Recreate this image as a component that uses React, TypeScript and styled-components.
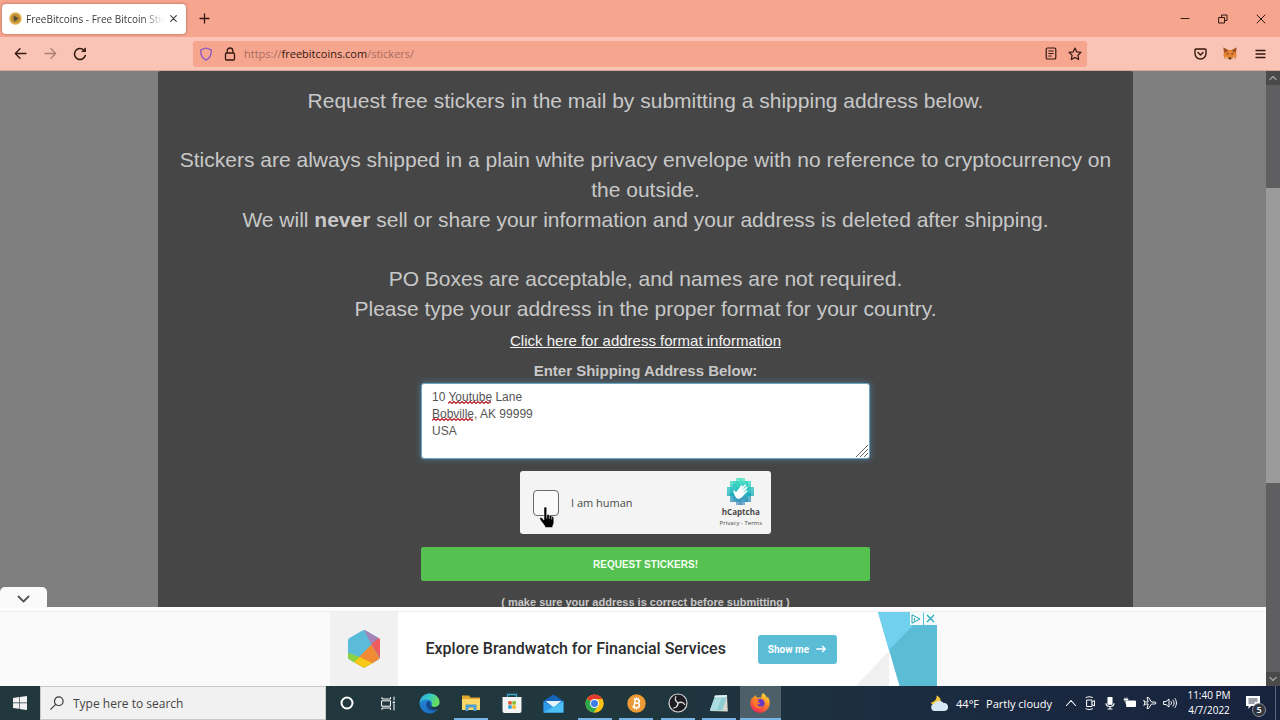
import React from "react";
import styled, { createGlobalStyle, css } from "styled-components";

const uiFont = `"Open Sans", "Noto Sans", sans-serif`;
const siteFont = `"Liberation Sans", Arial, sans-serif`;

const GlobalStyle = createGlobalStyle`
  *, *::before, *::after { box-sizing: border-box; }
  body { margin: 0; font-family: ${uiFont}; overflow: hidden; }
  button { font: inherit; color: inherit; border: 0; padding: 0; background: none; cursor: pointer; }
  svg { display: block; flex: none; }
`;

const Desktop = styled.div`
  display: flex;
  flex-direction: column;
  height: 100vh;
  background: #7f7f7f;
`;

/* ---------- browser chrome ---------- */

const TitleBar = styled.header`
  flex: none;
  height: 37px;
  display: flex;
  align-items: center;
  background: #f6a58f;
  color: #33190f;
`;

const Tab = styled.div`
  width: 184px;
  height: 30px;
  margin: 0 8px 0 2px;
  padding: 0 8px 0 7px;
  display: flex;
  align-items: center;
  gap: 4px;
  background: #fff;
  border-radius: 4px;
  box-shadow: 0 0 3px rgba(90, 30, 10, 0.5);
  color: #3a3a3f;
`;

const TabTitle = styled.span`
  flex: 1;
  min-width: 0;
  overflow: hidden;
  white-space: nowrap;
  font-size: 10px;
  line-height: 16px;
  mask-image: linear-gradient(to right, #000 84%, transparent);
`;

const IconButton = styled.button<{ $w?: number; $dim?: boolean }>`
  width: ${(p) => p.$w ?? 20}px;
  height: 20px;
  flex: none;
  display: flex;
  align-items: center;
  justify-content: center;
  opacity: ${(p) => (p.$dim ? 0.4 : 1)};
`;

const WindowControls = styled.div`
  margin-left: auto;
  display: flex;
`;

const NavBar = styled.nav`
  flex: none;
  height: 34px;
  display: flex;
  align-items: center;
  background: #f9c3b5;
  border-bottom: 1px solid #d9a496;
  color: #33190f;
`;

const NavGroup = styled.div`
  width: 193px;
  flex: none;
  display: flex;
  gap: 10px;
  padding-left: 10px;
`;

const UrlBar = styled.div`
  flex: 1;
  height: 26px;
  display: flex;
  align-items: center;
  gap: 4px;
  padding: 0 2px 0 3px;
  background: #f6a58f;
  border-radius: 3px;
`;

const UrlField = styled.input`
  position: absolute;
  inset: 0;
  width: 100%;
  border: 0;
  padding: 0;
  background: none;
  opacity: 0;
`;

const UrlText = styled.label`
  position: relative;
  flex: 1;
  font-size: 11px;
  line-height: 20px;
  color: #a86e5e;
  strong { font-weight: 400; color: #33190f; }
`;

const NavActions = styled.div`
  width: 193px;
  flex: none;
  display: flex;
  justify-content: flex-end;
  gap: 10px;
  padding-right: 10px;
`;

/* ---------- web page ---------- */

const Viewport = styled.div`
  flex: 1;
  min-height: 0;
  display: flex;
`;

const PageColumn = styled.div`
  flex: 1;
  min-width: 0;
  display: flex;
  flex-direction: column;
`;

const Page = styled.main`
  flex: 1;
  min-height: 0;
  overflow: hidden;
  background: #7f7f7f;
  padding: 0 133px 0 158px;
  font-family: ${siteFont};
`;

const Card = styled.section`
  display: flex;
  flex-direction: column;
  align-items: center;
  min-height: 100%;
  padding: 15px 8px 0;
  background: #464646;
  border-radius: 3px 3px 0 0;
  color: #c8c8c8;
  text-align: center;
`;

const Lead = styled.p`
  margin: 0 0 29px;
  font-size: 21px;
  line-height: 30px;
  &:last-of-type { margin-bottom: 0; }
`;

const FormatLink = styled.a`
  margin-top: 5px;
  font-size: 15px;
  line-height: 24px;
  color: #f4f4f4;
  text-decoration: underline;
`;

const Form = styled.form`
  width: 449px;
  display: flex;
  flex-direction: column;
  align-items: center;
`;

const FieldLabel = styled.label`
  margin-top: 6px;
  font-size: 15px;
  font-weight: 700;
  line-height: 24px;
`;

const AddressBox = styled.div`
  position: relative;
  width: 100%;
  height: 76px;
`;

const Address = styled.textarea`
  display: block;
  width: 100%;
  height: 100%;
  margin: 0;
  padding: 5px 10px;
  border: 1px solid #6aa5c4;
  border-radius: 3px;
  outline: 0;
  box-shadow: 0 0 7px rgba(82, 148, 190, 0.7);
  background: #fff;
  color: #555;
  font-family: ${siteFont};
  font-size: 12px;
  line-height: 17px;
  resize: none;
`;

const Squiggle = styled.svg<{ $x: number; $y: number }>`
  position: absolute;
  left: ${(p) => p.$x}px;
  top: ${(p) => p.$y}px;
`;

const Grip = styled.svg`
  position: absolute;
  right: 2px;
  bottom: 2px;
`;

const Captcha = styled.div`
  position: relative;
  width: 251px;
  height: 63px;
  margin: 12px 0 13px;
  padding: 0 9px 0 13px;
  display: flex;
  align-items: center;
  background: #f4f4f4;
  border-radius: 3px;
  color: #4a4a4a;
  font-family: ${uiFont};
`;

const CaptchaCheck = styled.input`
  appearance: none;
  width: 26px;
  height: 26px;
  margin: 0 12px 0 0;
  border: 1px solid #6b6b6b;
  border-radius: 4px;
  background: #fafafa;
`;

const CaptchaLabel = styled.label`
  flex: 1;
  text-align: left;
  font-size: 11px;
  line-height: 16px;
`;

const CaptchaBrand = styled.div`
  display: flex;
  flex-direction: column;
  align-items: center;
  font-size: 8px;
  font-weight: 700;
  line-height: 12px;
`;

const CaptchaLinks = styled.span`
  font-size: 6px;
  font-weight: 400;
  line-height: 10px;
  a { color: inherit; text-decoration: none; }
`;

const Pointer = styled.svg`
  position: absolute;
  left: 18px;
  top: 35px;
  pointer-events: none;
`;

const SubmitButton = styled.button`
  && {
    width: 100%;
    height: 34px;
    background: #54c151;
    border-radius: 2px;
    color: #f2fff0;
    font-family: ${siteFont};
    font-size: 10px;
    font-weight: 700;
  }
`;

const Hint = styled.strong`
  margin-top: 13px;
  font-size: 11px;
  line-height: 16px;
`;

/* ---------- scrollbar ---------- */

const ScrollTrack = styled.div`
  width: 14px;
  flex: none;
  display: flex;
  flex-direction: column;
  background: #5f5f61;
`;

const ScrollArrow = styled.button`
  && {
    height: 14px;
    display: flex;
    align-items: center;
    justify-content: center;
    background: #4a4a4a;
    color: #9a9a9a;
  }
`;

const ScrollSpace = styled.div<{ $grow: number; $thumb?: boolean }>`
  flex: ${(p) => p.$grow};
  ${(p) => p.$thumb && css`background: #9b9b9b;`}
`;

/* ---------- anchored ad ---------- */

const AdBar = styled.aside`
  position: relative;
  flex: none;
  height: 79px;
  padding-top: 5px;
  display: flex;
  justify-content: center;
  background: linear-gradient(#fdfdfd 4px, #eeeeee 4px 5px, #fafafa 5px);
`;

const AdHandle = styled.button`
  && {
    position: absolute;
    left: 0;
    top: -20px;
    width: 47px;
    height: 21px;
    display: flex;
    align-items: center;
    justify-content: center;
    padding-top: 2px;
    background: #fafafa;
    border-radius: 5px 5px 0 0;
    color: #555;
  }
`;

const Ad = styled.div`
  position: relative;
  width: 607px;
  display: flex;
  align-items: center;
  background: #fff;
  font-family: Roboto, sans-serif;
`;

const AdLogo = styled.div`
  width: 68px;
  height: 100%;
  display: flex;
  align-items: center;
  justify-content: center;
  background: #f1f1f1;
`;

const AdTitle = styled.h2`
  flex: 1;
  margin: 0;
  padding-left: 28px;
  font-size: 16px;
  font-weight: 500;
  line-height: 24px;
  white-space: nowrap;
  color: #2b2c2e;
`;

const AdButton = styled.button`
  && {
    width: 79px;
    height: 29px;
    display: flex;
    align-items: center;
    justify-content: center;
    gap: 7px;
    background: #5bbcd6;
    border-radius: 3px;
    color: #fff;
    font-size: 10px;
    font-weight: 700;
  }
`;

const AdChoices = styled.div`
  position: absolute;
  top: 0;
  right: 0;
  display: flex;
  gap: 1px;
`;

const AdChoice = styled.button`
  && {
    width: 13px;
    height: 13px;
    background: #f4fbfc;
    display: flex;
    align-items: center;
    justify-content: center;
  }
`;

/* ---------- taskbar ---------- */

const Taskbar = styled.footer`
  flex: none;
  height: 34px;
  display: flex;
  align-items: stretch;
  background: linear-gradient(to right, #21383d, #20373e 50%, #1b2c40 70%, #18233e);
  color: #fff;
`;

const StartButton = styled.button`
  width: 40px;
  display: flex;
  align-items: center;
  justify-content: center;
`;

const SearchBox = styled.label`
  width: 286px;
  display: flex;
  align-items: center;
  gap: 9px;
  padding-left: 9px;
  background: #f1f1f1;
  border: 1px solid #c9c9c9;
  color: #3a3a3a;
`;

const SearchInput = styled.input`
  flex: 1;
  min-width: 0;
  border: 0;
  padding: 0;
  outline: 0;
  background: none;
  font-family: ${uiFont};
  font-size: 12px;
  &::placeholder { color: #444; opacity: 1; }
`;

const AppRow = styled.div`
  width: 455px;
  display: flex;
`;

const AppButton = styled.button<{ $running?: boolean; $active?: boolean }>`
  && {
    flex: 1;
    display: flex;
    align-items: center;
    justify-content: center;
    background: ${(p) => (p.$active ? "#4d5f68" : "none")};
    ${(p) => p.$running && css`
      background-image: linear-gradient(#76b4e6, #76b4e6);
      background-repeat: no-repeat;
      background-position: bottom center;
      background-size: ${p.$active ? "100%" : "34px"} 2px;
    `}
  }
`;

const Tray = styled.div`
  margin-left: auto;
  display: flex;
  align-items: center;
`;

const Weather = styled.button`
  && {
    display: flex;
    align-items: center;
    gap: 7px;
    margin-right: 13px;
    font-size: 11px;
  }
`;

const TrayIcons = styled.div`
  display: flex;
  align-items: center;
  gap: 6px;
`;

const Clock = styled.time`
  width: 56px;
  margin-left: 4px;
  display: flex;
  flex-direction: column;
  align-items: center;
  font-size: 10px;
  line-height: 15px;
  white-space: nowrap;
`;

const Notices = styled.button`
  && {
    position: relative;
    width: 32px;
    height: 28px;
    margin-right: 6px;
    display: flex;
    align-items: center;
    justify-content: center;
  }
`;

const NoticeCount = styled.span`
  position: absolute;
  right: 3px;
  bottom: 0;
  width: 14px;
  height: 14px;
  border: 1px solid #8d929c;
  border-radius: 50%;
  background: #30343d;
  font-size: 9px;
  font-weight: 600;
  line-height: 12px;
  text-align: center;
`;

const ShowDesktop = styled.button`
  && {
    width: 5px;
    align-self: stretch;
    border-left: 1px solid #5c6478;
  }
`;

/* ---------- drawings ---------- */

type StrokeProps = { w?: number; h?: number; box?: string; sw?: number; children: React.ReactNode };
const Stroke = ({ w = 16, h = w, box = `0 0 ${w} ${h}`, sw = 1.3, children }: StrokeProps) => (
  <svg width={w} height={h} viewBox={box} fill="none" stroke="currentColor" strokeWidth={sw} strokeLinecap="round" strokeLinejoin="round" aria-hidden="true">
    {children}
  </svg>
);

const Coin = () => (
  <svg width="13" height="13" viewBox="0 0 13 13" aria-hidden="true">
    <circle cx="6.5" cy="6.5" r="6.2" fill="#e0ae4a" />
    <circle cx="6.5" cy="6.5" r="4.4" fill="#b98a35" />
    <path d="M4.6 3.4 9.4 6.4 5.200 9.600Z" fill="#4d4f35" />
  </svg>
);

const Fox = () => (
  <svg width="14" height="13" viewBox="0 0 14 13" aria-hidden="true">
    <path d="M.5.5 5 3h4L13.5.5 13 5.5l.6 3-1.3 3.7-3.3-.7L8 12.5H6l-1-1-3.300.7L.4 8.500 1 5.500Z" fill="#e8812f" />
    <path d="M.5.5 5 3 4 5 1 5.500ZM13.500.5 9 3l1 2 3 .5Z" fill="#9a5428" />
    <path d="m3.500 6 2 .6-.3 1.400ZM10.500 6l-2 .6.3 1.400ZM6 10.500h2l.3 1.700H5.700Z" fill="#33302f" />
    <path d="m1.700 12.200 1.300-3 2 2.300ZM12.300 12.200l-1.300-3-2 2.300Z" fill="#d9bfaa" />
  </svg>
);

const pixelRows = [[3, 3], [1, 7], [1, 7], [0, 9], [0, 9], [0, 9], [1, 7], [1, 7], [3, 3]];
const pixelShades = ["#4fe3c4", "#3ad8c0", "#2fcdbf", "#26c3bf", "#1db8bd", "#1cabbb", "#259fba", "#3a97bd", "#5a9ac6"];
const CaptchaLogo = () => (
  <svg width="27" height="28" viewBox="0 0 27 28" aria-hidden="true">
    {pixelRows.map(([x, n], row) =>
      Array.from({ length: n }, (_, i) => (
        <rect key={`${row}-${i}`} x={(x + i) * 3} y={row * 3} width="3" height="3" fill={pixelShades[row]} opacity={i < 1 || i > n - 2 ? 0.75 : 1 - ((row + i) % 3) * 0.05} shapeRendering="crispEdges" />
      ))
    )}
    <path d="M7 15.500c-.8-1.500-.9-2.800-.2-3.100.7-.3 1.200.5 2 1.600l.8-.4 4.500-6c.9-1 2 .0 1.400 1L12.900 12l4.500-5.300c.9-.9 2 .1 1.300 1.100l-4 5.300 4.600-4.300c.9-.7 1.800.3 1 1.200l-4.300 4.700 3.500-2.400c.9-.5 1.600.5.8 1.200-2.500 2-4.500 5.900-7.300 7-2.700 1-4.600-.9-6-5Z" fill="#fff" />
  </svg>
);

const Hexagon = () => (
  <svg width="34" height="40" viewBox="0 0 34 40" aria-hidden="true">
    <clipPath id="hex"><path d="M15.500 1.400a3 3 0 0 1 3 0l13 7.500a3 3 0 0 1 1.500 2.600v16.500a3 3 0 0 1-1.500 2.600l-13 7.700a3 3 0 0 1-3 0l-13-7.700A3 3 0 0 1 1 28V11.500a3 3 0 0 1 1.500-2.600Z" /></clipPath>
    <g clipPath="url(#hex)">
      <path d="M0 0h34v40H0Z" fill="#5bbcd9" />
      <path d="M16.500 0h4.500l13 8-9.500 7.500Z" fill="#a583b8" />
      <path d="M34 7v24l-9.500-15.500Z" fill="#f05b5e" />
      <path d="m24.500 15.500 9.500 16.500-8 3.500-14-7.500Z" fill="#f08a33" />
      <path d="m24.500 15.500 9.500-8v21Z" fill="#f05b5e" />
      <path d="M0 23.500 12.500 28 6 36 0 32Z" fill="#8ed13f" />
      <path d="m12.500 28 14 6.500-9 7L6 34Z" fill="#f9c715" />
    </g>
  </svg>
);

const AdArt = () => (
  <svg width="100" height="74" viewBox="0 0 100 74" aria-hidden="true">
    <path d="M19 74 52 39v35Z" fill="#f0f0f1" />
    <path d="M41 0h59v74H62.500Z" fill="#5bbcd6" />
    <path d="M41 0h48L52 38Z" fill="#70d0ee" />
  </svg>
);

const HandPointer = () => (
  <Pointer width="18" height="24" viewBox="0 0 18 24" aria-hidden="true">
    <path d="M6 2.500C6 .6 8.700.6 8.700 2.500V9c.6-.8 2.500-.5 2.600.6.8-.7 2.300-.2 2.400.9.900-.4 2.100.2 2.100 1.300v4.700c0 1.600-1 2.200-1.300 5H7.300C6.900 19 3.500 16.500 2 13.300c-.8-1.900 1.200-2.500 2.300-1.100L6 14Z" fill="#000" stroke="#fff" strokeWidth=".5" />
    <path d="M8.700 9v3.500M11.300 10v3M13.700 11v2.500" stroke="#fff" strokeWidth=".6" />
  </Pointer>
);

const Wave = ({ x, y, length }: { x: number; y: number; length: number }) => (
  <Squiggle $x={x} $y={y} width={length} height="3" viewBox={`0 0 ${length} 3`} aria-hidden="true">
    <path d={"M0 2.500" + Array.from({ length: Math.ceil(length / 4) }, () => "l2-2 2 2").join("")} fill="none" stroke="#b8202c" strokeWidth="1.200" />
  </Squiggle>
);

const Edge = () => (
  <svg width="21" height="21" viewBox="0 0 21 21" aria-hidden="true">
    <defs>
      <linearGradient id="edgeTop" x1="0" y1="0" x2="1" y2="0.4"><stop offset="0" stopColor="#2aa5e0" /><stop offset=".5" stopColor="#34c9c4" /><stop offset="1" stopColor="#68dd5a" /></linearGradient>
      <linearGradient id="edgeLow" x1="0" y1="0" x2="0" y2="1"><stop offset="0" stopColor="#2390dc" /><stop offset="1" stopColor="#1c6fc0" /></linearGradient>
    </defs>
    <circle cx="10.500" cy="10.500" r="10" fill="url(#edgeLow)" />
    <path d="M.6 10C1 4.300 5.500.5 10.700.5c5.900 0 9.800 4.200 9.800 8.500 0 3.200-2.300 5-5 5-2 0-3-.8-2.700-1.700.6-1.200.7-5.800-4.600-5.800C4.600 6.500 1.500 8 .6 10Z" fill="url(#edgeTop)" />
    <path d="M8 8.800c-2.200 3 .2 8.300 5 8.800 2.500.3 4.500-.5 6-1.600-2 .5-7 .4-7.500-3.500-.2-2 .6-3-.5-3.700-.9-.6-2.200-.7-3 0Z" fill="#14488c" />
    <path d="M12.900 12.500c-.2 1.100.8 1.600 2.600 1.600 2 0 4-1 4.700-2.800l.8 1.700-2.200 3c-2.500.6-6.500.3-7-2.500Z" fill="#20373e" />
  </svg>
);

const Folder = () => (
  <svg width="20" height="18" viewBox="0 0 20 18" aria-hidden="true">
    <path d="M1 1.500h7l1.500 2H19V16H1Z" fill="#e3a92f" />
    <path d="M1 5h18v11H1Z" fill="#fad766" />
    <path d="M4.500 17v-6.500h11V17h-3v-3.500h-5V17Z" fill="#4a9fd0" />
  </svg>
);

const Store = () => (
  <svg width="20" height="21" viewBox="0 0 20 21" aria-hidden="true">
    <path d="M5.500 5V1.500h9V5" fill="none" stroke="#3fa9d4" strokeWidth="1.300" />
    <path d="M.5 4h19v14a2 2 0 0 1-2 2h-15a2 2 0 0 1-2-2Z" fill="#f3f3f3" />
    <path d="M6.300 8.200h3.400v3.400H6.300Z" fill="#e75227" /><path d="M10.400 8.200h3.400v3.400h-3.400Z" fill="#7db928" />
    <path d="M6.300 12.300h3.400v3.400H6.300Z" fill="#22a0da" /><path d="M10.400 12.300h3.400v3.400h-3.400Z" fill="#f6b718" />
  </svg>
);

const Mail = () => (
  <svg width="21" height="19" viewBox="0 0 21 19" aria-hidden="true">
    <path d="M.5 7 10.500.5l10 6.500v11.500H.5Z" fill="#1565b8" />
    <path d="M3 7h15l-7.500 6.500Z" fill="#e6f2fa" />
    <path d="M.5 7v11.500h20L.5 7Z" fill="#2f9be6" />
    <path d="M20.500 7v11.500H.5l20-11.500Z" fill="#4cc0f4" />
    <path d="M2.500 7h16l-8 6Z" fill="#e6f2fa" />
  </svg>
);

const Chrome = () => (
  <svg width="19" height="19" viewBox="0 0 20 20" aria-hidden="true">
    <circle cx="10" cy="10" r="9.500" fill="#fbc116" />
    <path d="M10 10 1.800 5.300A9.500 9.500 0 0 1 18.200 5.300H10Z" fill="#e33b2e" />
    <path d="M1.800 5.300A9.500 9.500 0 0 0 9.300 19.500L13.500 13 10 10Z" fill="#2da94f" />
    <path d="M10 5.300h8.200a9.500 9.500 0 0 1-8.900 14.200L14 12.500Z" fill="#fbc116" />
    <circle cx="10" cy="10" r="4.700" fill="#fff" /><circle cx="10" cy="10" r="3.700" fill="#3f7de8" />
  </svg>
);

const BitcoinApp = () => (
  <svg width="19" height="19" viewBox="0 0 19 19" aria-hidden="true">
    <circle cx="9.500" cy="9.500" r="9.200" fill="#ee9a34" />
    <g transform="rotate(10 9.500 9.500)" fill="none" stroke="#fff">
      <path d="M7.600 5.300v8.200M6 5.300h4c2.600 0 2.600 3.800 0 3.800H7.600h2.900c2.900 0 2.900 4.400 0 4.400H6" strokeWidth="1.600" />
      <path d="M8.500 3.300v2M10.500 3.300v2M8.500 13.500v2M10.500 13.500v2" strokeWidth="1.100" />
    </g>
  </svg>
);

const Obs = () => (
  <svg width="20" height="20" viewBox="0 0 20 20" aria-hidden="true">
    <circle cx="10" cy="10" r="9" fill="#1e1c20" stroke="#d5d5d5" strokeWidth="1.200" />
    {[0, 120, 240].map((a) => (
      <path key={a} transform={`rotate(${a} 10 10)`} d="M10.400 10C8.200 9.300 6.300 6.800 7.900 3.600M10 9.800c-1.200-.7-2-1.800-2.300-3" fill="none" stroke="#dadada" strokeWidth="1.200" strokeLinecap="round" />
    ))}
  </svg>
);

const Notepad = () => (
  <svg width="19" height="19" viewBox="0 0 19 19" aria-hidden="true">
    <path d="m14.500 3 3.500-2 .8 16.500L1 17l1-1.500Z" fill="#d9d9d0" />
    <path d="M6 1.500 18 1l-4.500 15.200L.8 16.500Z" fill="#8fcdd5" />
    <path d="M6 1.500 18 1l-.7 2.300L5.200 3.800Z" fill="#dcf0f1" />
    <path d="M5 5.500 12.500 4 8 16.400l-7.200.1Z" fill="#b9e3e7" opacity=".7" />
  </svg>
);

const Firefox = () => (
  <svg width="20" height="20" viewBox="0 0 20 20" aria-hidden="true">
    <defs><linearGradient id="fire" x1=".8" y1="0" x2=".3" y2="1"><stop offset="0" stopColor="#ffe23d" /><stop offset=".45" stopColor="#ff8a22" /><stop offset="1" stopColor="#ef2456" /></linearGradient></defs>
    <path d="M13 0c3 2 3.500 3.800 3.600 5 .8-.3 1-.8 1-1.400C19 5.500 19.800 8 19.700 10.300 19.500 15.600 15.300 19.800 10 19.800S.4 15.500.4 10.200C.4 7.500 1.500 5.500 2.500 4c0 .7.200 1.200.500 1.600C3.500 4 4.500 2.800 5.700 2c0 1.300.6 2.300 2 2.500 1.500.1 2.500-.2 3.500.5C11 3.300 11.600 1.500 13 0Z" fill="url(#fire)" />
    <circle cx="10" cy="10.300" r="4.600" fill="#6d37c5" />
    <path d="M3.500 7.500C5.500 6 8 6.500 9.700 7.800c-1.200.1-2 .6-2.200 1.500 1 .4 2.200.3 2.800 1-.8 1.500-2.500 1.300-3.500 1.300.8 2 4 2.500 6 .8-1 3-4.800 3.800-7 2C3.500 12.500 3 10 3.500 7.500Z" fill="#ff7a26" />
  </svg>
);

const PartlyCloudy = () => (
  <svg width="19" height="17" viewBox="0 0 19 17" aria-hidden="true">
    <path d="M6.500.5C7 4 5 6.800.8 7.500 2 10.500 6 11.500 9 9.500 12 7 11 2 6.500.5Z" fill="#f3c63c" />
    <path d="M4.500 16a3.700 3.700 0 0 1-.3-7.300C5.500 5.800 11 4.800 13.500 8a4 4 0 0 1 1 8Z" fill="#d4e8f5" />
  </svg>
);

const pinned: { name: string; icon: React.ReactNode; running?: boolean; active?: boolean }[] = [
  { name: "Cortana", icon: <Stroke w={14} sw={2}><circle cx="7" cy="7" r="5.500" /></Stroke> },
  { name: "Task View", icon: <Stroke w={15} sw={1}><path d="M1 1.500v1.500h8.500V1.500M1 13.500V12h8.500v1.500M1 4.800h8.500v5.400H1ZM13 1v3M13 8.500v5.500M12.500 6h1v1h-1z" /></Stroke> },
  { name: "Microsoft Edge", icon: <Edge /> },
  { name: "File Explorer", icon: <Folder />, running: true },
  { name: "Microsoft Store", icon: <Store /> },
  { name: "Mail", icon: <Mail /> },
  { name: "Google Chrome", icon: <Chrome />, running: true },
  { name: "Bitcoin Core", icon: <BitcoinApp />, running: true },
  { name: "OBS Studio", icon: <Obs />, running: true },
  { name: "Notepad", icon: <Notepad />, running: true },
  { name: "Firefox", icon: <Firefox />, running: true, active: true },
];

export default function App() {
  return (
    <Desktop>
      <GlobalStyle />
      <TitleBar>
        <Tab>
          <Coin />
          <TabTitle>FreeBitcoins - Free Bitcoin Stickers</TabTitle>
          <IconButton $w={10} aria-label="Close tab"><Stroke w={7} sw={1.1}><path d="m.7.7 5.600 5.600M6.300.7.7 6.300" /></Stroke></IconButton>
        </Tab>
        <IconButton aria-label="New tab"><Stroke w={11}><path d="M5.500 1v9M1 5.500h9" /></Stroke></IconButton>
        <WindowControls>
          <IconButton $w={38} aria-label="Minimize"><Stroke w={10} sw={1}><path d="M1 4.500h8" /></Stroke></IconButton>
          <IconButton $w={38} aria-label="Restore"><Stroke w={10} sw={1}><path d="M1 3.500h5.500V9H1ZM3.500 3.500V1H9v5.500H6.500" /></Stroke></IconButton>
          <IconButton $w={38} aria-label="Close"><Stroke w={10} sw={1}><path d="m1 1 8 8M9 1 1 9" /></Stroke></IconButton>
        </WindowControls>
      </TitleBar>
      <NavBar>
        <NavGroup>
          <IconButton aria-label="Back"><Stroke w={13}><path d="M12 6.500H1.500M6 1.800 1.300 6.500 6 11.200" /></Stroke></IconButton>
          <IconButton $dim aria-label="Forward"><Stroke w={13}><path d="M1 6.500h10.500M7 1.800l4.700 4.700L7 11.200" /></Stroke></IconButton>
          <IconButton aria-label="Reload"><Stroke w={14} sw={1.5}><path d="M12.300 8.500A5.500 5.500 0 1 1 10.800 3l1.400 1.300" /><path d="M12.400 1.300v3.300H9.100Z" fill="currentColor" strokeWidth=".8" /></Stroke></IconButton>
        </NavGroup>
        <UrlBar>
          <IconButton aria-label="Tracking protection"><svg width="14" height="14" viewBox="0 0 14 14" fill="none" stroke="#8a57c4" strokeWidth="1.300" strokeLinejoin="round"><path d="M7 1 12.300 2.800C12.500 8 11 11.300 7 13.200 3 11.300 1.500 8 1.700 2.800Z" /></svg></IconButton>
          <IconButton aria-label="Site information"><Stroke w={12} h={14}><path d="M2.500 6h7a1 1 0 0 1 1 1v5a1 1 0 0 1-1 1h-7a1 1 0 0 1-1-1V7a1 1 0 0 1 1-1ZM3.200 6V3.800a2.800 2.800 0 0 1 5.600 0V6" /></Stroke></IconButton>
          <UrlText>https://<strong>freebitcoins.com</strong>/stickers/<UrlField aria-label="Address" /></UrlText>
          <IconButton aria-label="Reader view"><Stroke w={12} h={13} sw={1.2}><path d="M2.500 1h7a1.300 1.300 0 0 1 1.300 1.300v8.400A1.300 1.300 0 0 1 9.500 12h-7a1.300 1.300 0 0 1-1.300-1.300V2.300A1.300 1.300 0 0 1 2.500 1ZM3.800 4h4.400M3.800 6.500h4.400M3.800 9h2.400" /></Stroke></IconButton>
          <IconButton aria-label="Bookmark"><Stroke w={14} sw={1.2}><path d="m7 1 1.800 3.900 4.200.5-3.100 2.900.8 4.200L7 10.400l-3.700 2.100.8-4.200L1 5.400l4.200-.5Z" /></Stroke></IconButton>
        </UrlBar>
        <NavActions>
          <IconButton aria-label="Save to Pocket"><Stroke w={13} h={12} sw={1.4}><path d="M2 1h9a1 1 0 0 1 1 1v3.500a5.500 5.500 0 0 1-11 0V2a1 1 0 0 1 1-1ZM4 4.500 6.500 7 9 4.500" /></Stroke></IconButton>
          <IconButton aria-label="MetaMask"><Fox /></IconButton>
          <IconButton aria-label="Menu"><Stroke w={11} h={10}><path d="M1 1.500h9M1 5h9M1 8.500h9" /></Stroke></IconButton>
        </NavActions>
      </NavBar>

      <Viewport>
        <PageColumn>
          <Page>
            <Card>
              <Lead>Request free stickers in the mail by submitting a shipping address below.</Lead>
              <Lead>
                Stickers are always shipped in a plain white privacy envelope with no reference to cryptocurrency on the outside.
                <br />
                We will <strong>never</strong> sell or share your information and your address is deleted after shipping.
              </Lead>
              <Lead>
                PO Boxes are acceptable, and names are not required.
                <br />
                Please type your address in the proper format for your country.
              </Lead>
              <FormatLink href="#format">Click here for address format information</FormatLink>
              <Form onSubmit={(e) => e.preventDefault()}>
                <FieldLabel htmlFor="address">Enter Shipping Address Below:</FieldLabel>
                <AddressBox>
                  <Address id="address" spellCheck={false} defaultValue={"10 Youtube Lane\nBobville, AK 99999\nUSA"} />
                  <Wave x={27} y={18} length={43} />
                  <Wave x={11} y={35} length={41} />
                  <Grip width="12" height="12" viewBox="0 0 12 12" aria-hidden="true"><path d="M0 12 12 0M4 12l8-8M8 12l4-4" stroke="#666" strokeWidth="1" /></Grip>
                </AddressBox>
                <Captcha>
                  <CaptchaCheck id="human" type="checkbox" />
                  <CaptchaLabel htmlFor="human">I am human</CaptchaLabel>
                  <CaptchaBrand>
                    <CaptchaLogo />
                    hCaptcha
                    <CaptchaLinks><a href="#privacy">Privacy</a> - <a href="#terms">Terms</a></CaptchaLinks>
                  </CaptchaBrand>
                  <HandPointer />
                </Captcha>
                <SubmitButton type="submit">REQUEST STICKERS!</SubmitButton>
                <Hint>( make sure your address is correct before submitting )</Hint>
              </Form>
            </Card>
          </Page>
          <AdBar>
            <AdHandle aria-label="Collapse ad"><Stroke w={13} h={8} sw={1.8}><path d="m1.500 1.500 5 5 5-5" /></Stroke></AdHandle>
            <Ad>
              <AdLogo><Hexagon /></AdLogo>
              <AdTitle>Explore Brandwatch for Financial Services</AdTitle>
              <AdButton>Show me<Stroke w={10} h={8} sw={1.3}><path d="M.7 4h8.600M6.500 1.300 9.300 4 6.500 6.700" /></Stroke></AdButton>
              <AdArt />
              <AdChoices>
                <AdChoice aria-label="AdChoices"><svg width="10" height="10" viewBox="0 0 10 10" fill="none" stroke="#22a7b5" strokeWidth="1"><path d="M1 .8 9 5 1 9.200ZM3.500 4v3" /></svg></AdChoice>
                <AdChoice aria-label="Close ad"><svg width="9" height="9" viewBox="0 0 9 9" fill="none" stroke="#22a7b5" strokeWidth="1.200"><path d="m1 1 7 7M8 1 1 8" /></svg></AdChoice>
              </AdChoices>
            </Ad>
          </AdBar>
        </PageColumn>
        <ScrollTrack>
          <ScrollArrow aria-label="Scroll up"><Stroke w={8} h={6} sw={1.5}><path d="m1 4.500 3-3 3 3" /></Stroke></ScrollArrow>
          <ScrollSpace $grow={103} />
          <ScrollSpace $grow={296} $thumb />
          <ScrollSpace $grow={189} />
          <ScrollArrow aria-label="Scroll down"><Stroke w={8} h={6} sw={1.5}><path d="m1 1.500 3 3 3-3" /></Stroke></ScrollArrow>
        </ScrollTrack>
      </Viewport>

      <Taskbar>
        <StartButton aria-label="Start"><svg width="14" height="14" viewBox="0 0 14 14" fill="#f2f2f2"><path d="M0 2 6 1.100v5.500H0ZM6.600 1 14 0v6.600H6.600ZM0 7.300h6v5.500L0 12ZM6.600 7.300H14V14l-7.400-1Z" /></svg></StartButton>
        <SearchBox>
          <Stroke w={14} sw={1.2}><circle cx="8.800" cy="5.200" r="4.300" /><path d="M5.700 8.300.8 13.200" /></Stroke>
          <SearchInput aria-label="Search" placeholder="Type here to search" />
        </SearchBox>
        <AppRow>
          {pinned.map((app) => (
            <AppButton key={app.name} aria-label={app.name} $running={app.running} $active={app.active}>{app.icon}</AppButton>
          ))}
        </AppRow>
        <Tray>
          <Weather><PartlyCloudy /><span>44°F</span><span>Partly cloudy</span></Weather>
          <TrayIcons>
            <Stroke w={12} h={8} sw={1.1}><path d="m1.500 6.500 4.500-5 4.500 5" /></Stroke>
            <Stroke w={14} sw={1}><path d="M4 4h5v6.500H4ZM9 6l2.500-1.500V10L9 8.500M3 1.500c2-1 4.500-1 6.500 0M3 12.800c2 1 4.500 1 6.500 0" /></Stroke>
            <Stroke w={14} sw={1.1}><path d="M5 1.500h4v6.800H5Z" fill="currentColor" /><path d="M3 7.500c0 4 8 4 8 0M7 11v2M5 13h4" /></Stroke>
            <Stroke w={14} h={12} sw={1}><path d="M4 4h8.500v5.500H4Z" fill="currentColor" /><path d="M1 2.500h4M2 1v3M4 1v3M3 4v2.500h1" /></Stroke>
            <Stroke w={14} sw={1}><path d="M1 4.500 2.500 6h2.700L4 1.500h1.500L8.500 6H12c1.400.3 1.400 1.700 0 2H8.500l-3 4.500H4L5.200 8H2.500L1 9.500 1.700 7Z" /></Stroke>
            <Stroke w={14} h={12} sw={1}><path d="M1 4.500h2L6 2v8L3 7.500H1ZM8 4.500c.8 1 .8 2 0 3M10 3c1.600 2 1.600 4 0 6M12 1.500c2 3 2 6 0 9" /></Stroke>
          </TrayIcons>
          <Clock><span>11:40 PM</span><span>4/7/2022</span></Clock>
          <Notices aria-label="Notifications">
            <svg width="14" height="14" viewBox="0 0 14 14"><path d="M0 0h14v10H5l-2.500 3V10H0Z" fill="#fff" /><path d="M2.500 3h9M2.500 5h9M2.500 7h6" stroke="#3a4250" /></svg>
            <NoticeCount>5</NoticeCount>
          </Notices>
          <ShowDesktop aria-label="Show desktop" />
        </Tray>
      </Taskbar>
    </Desktop>
  );
}
